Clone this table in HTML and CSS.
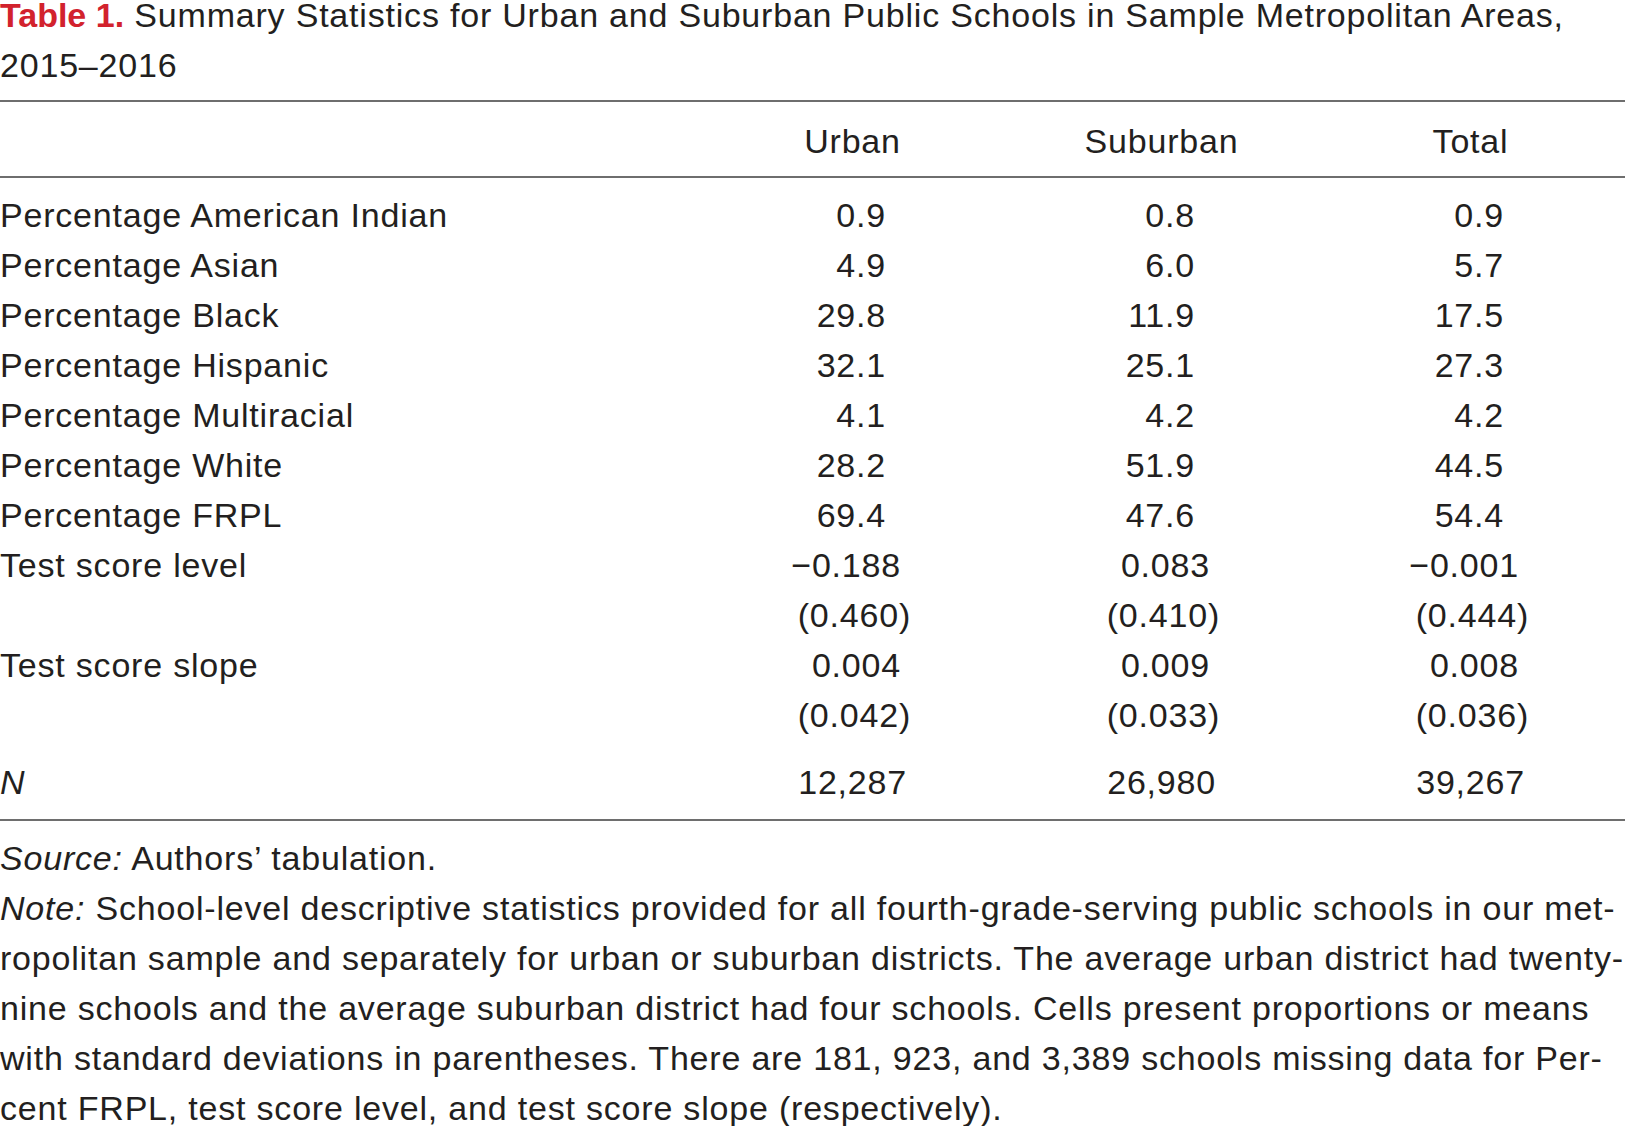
FILE: index.html
```html
<!DOCTYPE html>
<html lang="en">
<head>
<meta charset="utf-8">
<title>Table 1</title>
<link rel="stylesheet" href="styles.css">
</head>
<body>
<div class="page">
  <h1 class="caption"><span class="line"><span class="label">Table 1.</span> Summary Statistics for Urban and Suburban Public Schools in Sample Metropolitan Areas,</span><span class="line">2015–2016</span></h1>
  <table class="stats">
    <thead>
      <tr>
        <th class="stub"></th>
        <th class="col">Urban</th>
        <th class="col">Suburban</th>
        <th class="col">Total</th>
      </tr>
    </thead>
    <tbody>
      <tr class="first pct"><td class="stub">Percentage American Indian</td><td>0.9</td><td>0.8</td><td>0.9</td></tr>
      <tr class="pct"><td class="stub">Percentage Asian</td><td>4.9</td><td>6.0</td><td>5.7</td></tr>
      <tr class="pct"><td class="stub">Percentage Black</td><td>29.8</td><td>11.9</td><td>17.5</td></tr>
      <tr class="pct"><td class="stub">Percentage Hispanic</td><td>32.1</td><td>25.1</td><td>27.3</td></tr>
      <tr class="pct"><td class="stub">Percentage Multiracial</td><td>4.1</td><td>4.2</td><td>4.2</td></tr>
      <tr class="pct"><td class="stub">Percentage White</td><td>28.2</td><td>51.9</td><td>44.5</td></tr>
      <tr class="pct"><td class="stub">Percentage FRPL</td><td>69.4</td><td>47.6</td><td>54.4</td></tr>
      <tr class="dec"><td class="stub">Test score level</td><td>−0.188</td><td>0.083</td><td>−0.001</td></tr>
      <tr class="sd"><td class="stub"></td><td>(0.460)</td><td>(0.410)</td><td>(0.444)</td></tr>
      <tr class="dec"><td class="stub">Test score slope</td><td>0.004</td><td>0.009</td><td>0.008</td></tr>
      <tr class="sd"><td class="stub"></td><td>(0.042)</td><td>(0.033)</td><td>(0.036)</td></tr>
      <tr class="count"><td class="stub"><em>N</em></td><td>12,287</td><td>26,980</td><td>39,267</td></tr>
    </tbody>
  </table>
  <div class="notes">
    <p class="line"><em>Source:</em> Authors’ tabulation.</p>
    <p class="line"><em>Note:</em> School-level descriptive statistics provided for all fourth-grade-serving public schools in our met-</p>
    <p class="line">ropolitan sample and separately for urban or suburban districts. The average urban district had twenty-</p>
    <p class="line">nine schools and the average suburban district had four schools. Cells present proportions or means</p>
    <p class="line">with standard deviations in parentheses. There are 181, 923, and 3,389 schools missing data for Per-</p>
    <p class="line">cent FRPL, test score level, and test score slope (respectively).</p>
  </div>
</div>
</body>
</html>
```

FILE: styles.css
```css
html, body {
  margin: 0;
  padding: 0;
  background: #ffffff;
  overflow: hidden;
}

.page {
  width: 1625px;
  font-family: "Liberation Sans", Arial, sans-serif;
  font-size: 34px;
  letter-spacing: 0.8px;
  line-height: 50px;
  color: #231f20;
}

.caption {
  margin: -10px 0 0 0;
  font-size: 34px;
  font-weight: normal;
  line-height: 50px;
}

.caption .line {
  display: block;
  white-space: nowrap;
}

.caption .label {
  font-weight: bold;
  letter-spacing: 0;
  color: #d2222d;
}

.stats {
  margin-top: 10px;
  width: 1625px;
  border-collapse: separate;
  border-spacing: 0;
  table-layout: fixed;
}

.stats th,
.stats td {
  padding: 0;
  font-weight: normal;
  line-height: 50px;
  vertical-align: top;
  white-space: nowrap;
}

.stats th.stub,
.stats td.stub {
  width: 698px;
  text-align: left;
}

.stats thead th {
  border-top: 2px solid #6e6e6e;
  border-bottom: 2px solid #6e6e6e;
  padding-top: 14px;
  padding-bottom: 10px;
}

.stats th.col {
  width: 309px;
  text-align: center;
}

.stats td {
  text-align: right;
}

.stats tr.pct td { padding-right: 121px; }
.stats tr.dec td { padding-right: 106px; }
.stats tr.sd td { padding-right: 96px; }
.stats tr.count td { padding-right: 100px; }

.stats tr.first td { padding-top: 12px; }

.stats tr.count td {
  padding-top: 17px;
  padding-bottom: 12px;
  border-bottom: 2px solid #6e6e6e;
}

.stats td.stub { padding-right: 0; }

.notes {
  margin-top: 12px;
}

.notes .line {
  margin: 0;
  white-space: nowrap;
}
```
